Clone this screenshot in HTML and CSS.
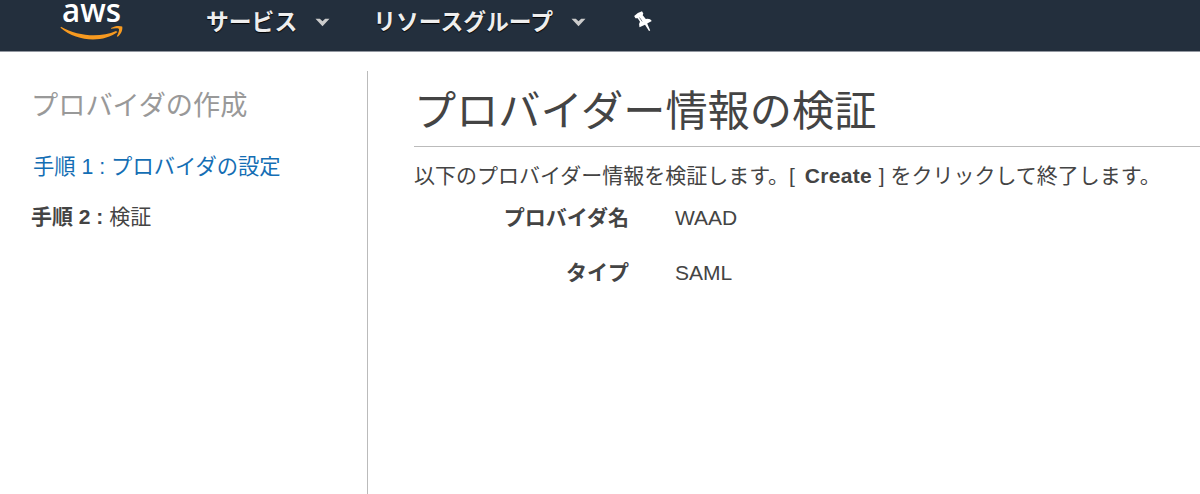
FILE: index.html
```html
<!DOCTYPE html>
<html lang="ja">
<head>
  <meta charset="UTF-8" />
  <meta name="viewport" content="width=device-width, initial-scale=1.0" />
  <title>プロバイダの作成</title>
  <link rel="stylesheet" href="styles.css">
</head>
<body>
  <header class="navbar">
    <a class="logo">
      <svg width="66" height="42" viewBox="0 0 66 42">
        <text class="logo-text" x="2" y="21.700" textLength="59" lengthAdjust="spacingAndGlyphs">aws</text>
        <path d="M1 26.800C18 36.500 40 38 56 31l1.500 1C43 43 17 42 .5 27.800z" fill="#f79a20" />
        <path d="M51 28c4-2.400 9-2.600 11.200-1.400.8 3.200-1.200 7.800-4.400 10.200l-1-.6c1.900-3.600 2.700-6.300 2-7.500-1.300-.8-4.800-.6-7.700.1z" fill="#f79a20" />
      </svg>
    </a>
    <a class="nav-item nav-services">サービス
      <svg class="caret" width="15" height="9" viewBox="0 0 15 9"><path d="M.5.800h4.300l2.700 2.500L10.200.800h4.300L7.500 8.200z" /></svg>
    </a>
    <a class="nav-item nav-groups">リソースグループ
      <svg class="caret" width="15" height="9" viewBox="0 0 15 9"><path d="M.5.800h4.300l2.700 2.500L10.200.800h4.300L7.500 8.200z" /></svg>
    </a>
    <svg class="pin" width="20" height="22" viewBox="0 0 20 22">
      <path d="M1.200 6Q4.500 2.500 9 1.300L10.300 3.500 9.700 5.200 12.800 9Q17 8 18.800 11L14.200 13.600 17.200 20.500 16 21 12 14.700 6.500 17.300Q5 14.500 7 11.800L4.700 8.200 2.400 8.300z" />
      <path class="pin-line" d="M6.500 7.500l2.700 4" />
    </svg>
  </header>

  <div class="wrapper">
    <aside class="sidebar">
      <h2>プロバイダの作成</h2>
      <a class="step step-link">手順 1 : プロバイダの設定</a>
      <div class="step"><b>手順 2 :</b> 検証</div>
    </aside>

    <main class="content">
      <h1>プロバイダー情報の検証</h1>
      <p class="description">以下のプロバイダー情報を検証します。[ <b>Create</b> ] をクリックして終了します。</p>
      <dl class="details">
        <dt>プロバイダ名</dt>
        <dd>WAAD</dd>
        <dt>タイプ</dt>
        <dd>SAML</dd>
      </dl>
    </main>
  </div>
</body>
</html>
```

FILE: styles.css
```css
body {
  margin: 0;
  height: 494px;
  overflow: hidden;
  font-family: "Liberation Sans", "Noto Sans CJK JP", sans-serif;
  font-size: 21px;
  background: white;
  color: #444;
}

.navbar {
  display: flex;
  align-items: flex-start;
  box-sizing: border-box;
  height: 52px;
  padding-left: 60px;
  background: #232f3d;
  border-bottom: 1px solid #9297a0;
}

.logo {
  width: 66px;
  height: 42px;
}

.logo-text {
  font-family: "Open Sans", sans-serif;
  font-size: 32px;
  font-weight: 600;
  fill: white;
}

.nav-item {
  display: flex;
  align-items: center;
  height: 41px;
  font-size: 22.8px;
  font-weight: bold;
  color: #eee;
  text-shadow: 0 1px 1px black;
  white-space: nowrap;
}

.nav-services {
  margin-left: 80px;
}

.nav-groups {
  margin-left: 43px;
}

.caret {
  margin: 4px 0 0 18px;
  fill: #ccc;
}

.pin {
  margin: 10px 0 0 47px;
  fill: white;
}

.pin-line {
  stroke: #7d858e;
  stroke-width: 1;
}

.wrapper {
  display: flex;
  padding-top: 19px;
}

.sidebar {
  box-sizing: border-box;
  width: 368px;
  height: 423px;
  padding: 15px 0 0 31px;
  border-right: 1px solid #bbb;
}

.sidebar h2 {
  margin: 0 0 26px;
  font-size: 27.2px;
  font-weight: normal;
  line-height: 40px;
  color: #999;
}

.step {
  display: block;
  margin-bottom: 20px;
  line-height: 30px;
}

.step-link {
  padding-left: 2px;
  font-size: 21.3px;
  color: #146eb4;
}

.content {
  flex: 1;
  padding-left: 46px;
}

.content h1 {
  margin: 0;
  padding: 11px 0 4px;
  border-bottom: 1px solid #bbb;
  font-size: 42.2px;
  font-weight: normal;
  line-height: 60px;
}

.description {
  margin: 14px 0 12px;
  line-height: 30px;
  white-space: nowrap;
}

.description b {
  margin: 0 1px 0 4px;
  letter-spacing: 0.3px;
}

.details {
  display: grid;
  grid-template-columns: 215px 1fr;
  gap: 25px 46px;
  margin: 0;
  line-height: 30px;
}

.details dt {
  font-weight: bold;
  text-align: right;
}

.details dd {
  margin: 0;
}
```
